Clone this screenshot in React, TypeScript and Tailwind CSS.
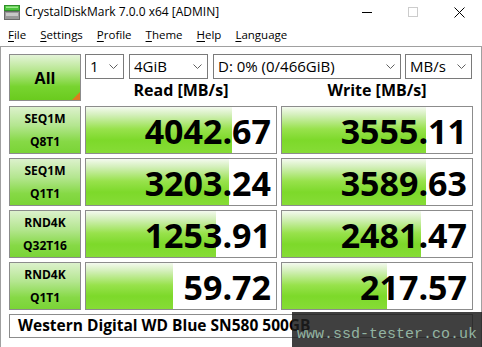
import React from "react";

const rows = [
  { a: "SEQ1M", b: "Q8T1", read: "4042.67", write: "3555.11", rf: 146, wf: 144 },
  { a: "SEQ1M", b: "Q1T1", read: "3203.24", write: "3589.63", rf: 143, wf: 144 },
  { a: "RND4K", b: "Q32T16", read: "1253.91", write: "2481.47", rf: 130, wf: 139 },
  { a: "RND4K", b: "Q1T1", read: "59.72", write: "217.57", rf: 87, wf: 105 },
];

const menus = ["File", "Settings", "Profile", "Theme", "Help", "Language"];

function Chevron() {
  return (
    <svg width="9" height="5" viewBox="0 0 9 5" className="shrink-0">
      <polyline points="0.5,0.5 4.5,4.5 8.5,0.5" fill="none" stroke="#606060" strokeWidth="1" />
    </svg>
  );
}

function Select({ value, w, className }: { value: string; w: string; className?: string }) {
  return (
    <div className={`${w} ${className ?? ""} h-[25px] border border-[#7a7a7a] bg-white flex items-center justify-between pl-[4px] pr-[5px] text-[15px]`}>
      <span>{value}</span>
      <Chevron />
    </div>
  );
}

function Meter({ value, fill }: { value: string; fill: number }) {
  return (
    <div className="relative w-[192px] h-[48px] border border-[#8c8c8c] bg-white">
      <div
        className="absolute left-0 top-0 bottom-0 bg-[linear-gradient(to_bottom,#f4faef_0%,#d2efb8_18%,#98e24c_48%,#7dd92a_72%,#86dc36_100%)]"
        style={{ width: `${fill}px` }}
      />
      <div className="relative h-full flex items-center justify-end pr-[5px] pt-[2px] text-[34px] font-bold leading-none">
        {value}
      </div>
    </div>
  );
}

export default function App() {
  return (
    <div className="relative w-[482px] h-[347px] overflow-hidden bg-white text-black font-['Open_Sans',sans-serif]">
      {/* Title bar */}
      <div className="h-[24px] flex items-center">
        <svg width="16" height="15" viewBox="0 0 16 15" className="ml-[4px]">
          <rect x="0.5" y="0.5" width="15" height="5" fill="#4cc43c" stroke="#2f8f2a" />
          <rect x="2" y="1.5" width="12" height="1.5" fill="#9be88c" />
          <rect x="0.5" y="6.5" width="15" height="8" fill="#9a9a9a" stroke="#6a6a6a" />
          <rect x="2" y="8" width="12" height="3" fill="#c8c8c8" />
        </svg>
        <span className="ml-[5px] text-[12px]">CrystalDiskMark 7.0.0 x64 [ADMIN]</span>
        <div className="ml-auto flex h-full">
          <div className="w-[46px] flex items-center justify-center">
            <div className="w-[10px] h-px bg-black" />
          </div>
          <div className="w-[46px] flex items-center justify-center">
            <div className="w-[10px] h-[10px] border border-[#cccccc]" />
          </div>
          <div className="w-[46px] flex items-center justify-center">
            <svg width="11" height="11" viewBox="0 0 11 11">
              <path d="M0.5 0.5 L10.5 10.5 M10.5 0.5 L0.5 10.5" stroke="#000" strokeWidth="1" />
            </svg>
          </div>
        </div>
      </div>

      {/* Menu bar */}
      <div className="h-[22px] flex items-center pl-[1px] text-[11.5px]">
        {menus.map((m) => (
          <span key={m} className="px-[7px]">
            <span className="underline underline-offset-2">{m[0]}</span>
            {m.slice(1)}
          </span>
        ))}
      </div>

      {/* Client area */}
      <div className="h-[301px] border-t border-x border-[#a0a0a0] pl-[8px] pt-[7px]">
        <div className="flex">
          <div className="relative w-[72px] h-[47px] border border-[#8c8c8c] bg-[linear-gradient(to_bottom,#e4f4d8_0%,#b6e68e_35%,#78d430_70%,#6acb1e_100%)] flex items-center justify-center text-[16px] font-bold">
            All
            <div className="absolute right-0 bottom-0 w-0 h-0 border-l-[8px] border-l-transparent border-b-[8px] border-b-[#e07a20]" />
          </div>
          <div className="ml-[4px] flex flex-col">
            <div className="flex">
              <Select value="1" w="w-[39px]" />
              <Select value="4GiB" w="w-[79px]" className="ml-[5px]" />
              <Select value="D: 0% (0/466GiB)" w="w-[188px]" className="ml-[5px]" />
              <Select value="MB/s" w="w-[67px]" className="ml-[4px]" />
            </div>
            <div className="flex h-[22px] items-center text-[16px] font-bold">
              <div className="w-[192px] text-center">Read [MB/s]</div>
              <div className="w-[192px] ml-[4px] text-center">Write [MB/s]</div>
            </div>
          </div>
        </div>

        <div className="mt-[5px] flex flex-col gap-[4px]">
          {rows.map((r, i) => (
            <div key={i} className="flex gap-[4px]">
              <div className="w-[72px] h-[48px] border border-[#8c8c8c] bg-[linear-gradient(to_bottom,#dcf1cc_0%,#b4e690_40%,#86d946_75%,#7ad436_100%)] flex flex-col items-center justify-center text-[12px] font-bold leading-[23px]">
                <span>{r.a}</span>
                <span>{r.b}</span>
              </div>
              <Meter value={r.read} fill={r.rf} />
              <Meter value={r.write} fill={r.wf} />
            </div>
          ))}
        </div>

        <div className="mt-[4px] w-[464px] h-[24px] border border-[#8c8c8c] bg-white flex items-center pl-[8px] text-[15.5px] font-bold">
          Western Digital WD Blue SN580 500GB
        </div>
      </div>

      {/* Watermark */}
      <div className="absolute right-0 bottom-0 w-[190px] h-[35px] bg-[rgba(30,30,30,0.85)] flex items-end justify-center pb-[5px] text-[15px] text-[#93b4a2] font-['Liberation_Mono',monospace] leading-none">
        www.ssd-tester.co.uk
      </div>
    </div>
  );
}
